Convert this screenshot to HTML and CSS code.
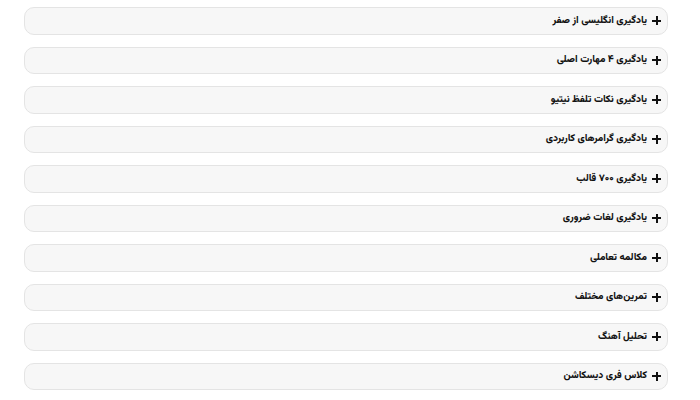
FILE: index.html
```html
<!DOCTYPE html>
<html lang="fa" dir="rtl">
<head>
<meta charset="utf-8">
<link rel="stylesheet" href="styles.css">
</head>
<body>
<div class="faq">
  <div class="item"><span class="plus"></span><span class="title">یادگیری انگلیسی از صفر</span></div>
  <div class="item"><span class="plus"></span><span class="title">یادگیری ۴ مهارت اصلی</span></div>
  <div class="item"><span class="plus"></span><span class="title">یادگیری نکات تلفظ نیتیو</span></div>
  <div class="item"><span class="plus"></span><span class="title">یادگیری گرامرهای کاربردی</span></div>
  <div class="item"><span class="plus"></span><span class="title">یادگیری ۷۰۰ قالب</span></div>
  <div class="item"><span class="plus"></span><span class="title">یادگیری لغات ضروری</span></div>
  <div class="item"><span class="plus"></span><span class="title">مکالمه تعاملی</span></div>
  <div class="item"><span class="plus"></span><span class="title">تمرین‌های مختلف</span></div>
  <div class="item"><span class="plus"></span><span class="title">تحلیل آهنگ</span></div>
  <div class="item"><span class="plus"></span><span class="title">کلاس فری دیسکاشن</span></div>
</div>
</body>
</html>
```
FILE: styles.css
```css
html, body {
  margin: 0;
  padding: 0;
  background: #ffffff;
}
body {
  font-family: "Vazirmatn", "Noto Sans Arabic", "DejaVu Sans Condensed", "DejaVu Sans", sans-serif;
  color: #111;
}
.faq {
  display: flex;
  flex-direction: column;
  gap: 12px;
  padding: 7px 32px 0 24px;
}
.item {
  box-sizing: border-box;
  height: 27.5px;
  border: 1px solid #e4e4e4;
  border-radius: 10px;
  background: #f7f7f7;
  display: flex;
  align-items: center;
  gap: 5px;
  padding-right: 6px;
}
.plus {
  position: relative;
  width: 9px;
  height: 9px;
  flex: none;
}
.plus::before,
.plus::after {
  content: "";
  position: absolute;
  background: #111;
}
.plus::before {
  left: 0;
  right: 0;
  top: 3.5px;
  height: 2px;
}
.plus::after {
  top: 0;
  bottom: 0;
  left: 3.5px;
  width: 2px;
}
.title {
  font-size: 10px;
  font-weight: 800;
  line-height: 1;
}
```
